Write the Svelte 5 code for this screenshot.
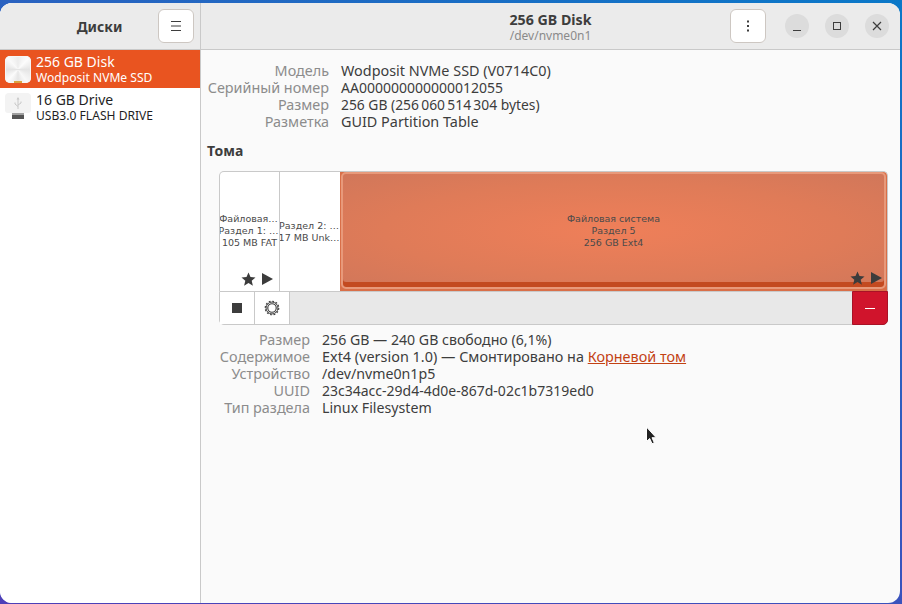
<script>
    const disks = [
        { name: '256 GB Disk', sub: 'Wodposit NVMe SSD', selected: true, kind: 'disk' },
        { name: '16 GB Drive', sub: 'USB3.0 FLASH DRIVE', selected: false, kind: 'usb' }
    ];

    const driveInfo = [
        ['Модель', 'Wodposit NVMe SSD (V0714C0)'],
        ['Серийный номер', 'AA000000000000012055'],
        ['Размер', '256 GB (256\u2009060\u2009514\u2009304 bytes)'],
        ['Разметка', 'GUID Partition Table']
    ];

    const volumeInfo = [
        ['Размер', '256 GB — 240 GB свободно (6,1%)'],
        ['Содержимое', 'Ext4 (version 1.0) — Смонтировано на '],
        ['Устройство', '/dev/nvme0n1p5'],
        ['UUID', '23c34acc-29d4-4d0e-867d-02c1b7319ed0'],
        ['Тип раздела', 'Linux Filesystem']
    ];
</script>

<div class="desktop">
    <div class="window">
        <aside class="sidebar">
            <header class="side-head">
                <span class="side-title">Диски</span>
                <button class="btn menu-btn" aria-label="Меню">
                    <svg width="16" height="16" viewBox="0 0 16 16"><path d="M3 3.500h10M3 8h10M3 12.500h10" stroke="#3d3d3d" stroke-width="1" fill="none"/></svg>
                </button>
            </header>
            <ul class="disk-list">
                {#each disks as disk}
                    <li class="disk" class:selected={disk.selected}>
                        {#if disk.kind === 'disk'}
                            <span class="disk-icon hdd"><span class="led"></span></span>
                        {:else}
                            <span class="disk-icon usb">
                                <span class="usb-body">
                                    <svg width="10" height="14" viewBox="0 0 10 14"><path d="M5 3v10M5 10.500L2 8V6.500M5 9l3-2V5.500" stroke="#c8c8c8" fill="none"/><path d="M3.500 3.500L5 1l1.500 2.500z" fill="#c8c8c8"/></svg>
                                </span>
                                <span class="usb-plug"></span>
                            </span>
                        {/if}
                        <span class="disk-text">
                            <span class="disk-name">{disk.name}</span>
                            <span class="disk-sub">{disk.sub}</span>
                        </span>
                    </li>
                {/each}
            </ul>
        </aside>

        <main class="content">
            <header class="main-head">
                <div class="titles">
                    <span class="title">256 GB Disk</span>
                    <span class="subtitle">/dev/nvme0n1</span>
                </div>
                <div class="controls">
                    <button class="btn more-btn" aria-label="Ещё">
                        <svg width="16" height="16" viewBox="0 0 16 16" fill="#3d3d3d"><rect x="7" y="2.500" width="2" height="2"/><rect x="7" y="7" width="2" height="2"/><rect x="7" y="11.500" width="2" height="2"/></svg>
                    </button>
                    <button class="win-btn" aria-label="Свернуть">
                        <svg width="12" height="12" viewBox="0 0 12 12"><path d="M2 10.500h8" stroke="#3d3d3d" stroke-width="1.200"/></svg>
                    </button>
                    <button class="win-btn" aria-label="Развернуть">
                        <svg width="12" height="12" viewBox="0 0 12 12"><rect x="2.500" y="2.500" width="7" height="7" stroke="#3d3d3d" fill="none"/></svg>
                    </button>
                    <button class="win-btn" aria-label="Закрыть">
                        <svg width="12" height="12" viewBox="0 0 12 12"><path d="M2 2l8 8M10 2l-8 8" stroke="#3d3d3d" stroke-width="1.200"/></svg>
                    </button>
                </div>
            </header>

            <section class="body">
                <dl class="info drive-info">
                    {#each driveInfo as row}
                        <dt>{row[0]}</dt>
                        <dd>{row[1]}</dd>
                    {/each}
                </dl>

                <h2 class="volumes-title">Тома</h2>

                <div class="volumes">
                    <div class="parts">
                        <div class="part fat">
                            <span>Файловая…</span>
                            <span>Раздел 1: …</span>
                            <span class="fat-size">105 MB FAT</span>
                            <div class="badges">
                                <svg width="15" height="14" viewBox="0 0 15 14"><path d="M7.500 0.500l2 4.600 5 .4-3.800 3.300 1.200 4.900-4.400-2.600-4.400 2.600 1.200-4.900L.5 5.500l5-.4z" fill="#3c3c3c"/></svg>
                                <svg width="11" height="12" viewBox="0 0 11 12"><path d="M0 0l11 6L0 12z" fill="#3c3c3c"/></svg>
                            </div>
                        </div>
                        <div class="part unknown">
                            <span>Раздел 2: …</span>
                            <span>17 MB Unk…</span>
                        </div>
                        <div class="ext4">
                            <div class="part ext4-inner">
                                <span>Файловая система</span>
                                <span>Раздел 5</span>
                                <span>256 GB Ext4</span>
                                <div class="badges">
                                    <svg width="15" height="14" viewBox="0 0 15 14"><path d="M7.500 0.500l2 4.600 5 .4-3.800 3.300 1.200 4.900-4.400-2.600-4.400 2.600 1.200-4.900L.5 5.500l5-.4z" fill="#3c3c3c"/></svg>
                                    <svg width="11" height="12" viewBox="0 0 11 12"><path d="M0 0l11 6L0 12z" fill="#3c3c3c"/></svg>
                                </div>
                            </div>
                        </div>
                    </div>
                    <div class="toolbar">
                        <button class="tool" aria-label="Остановить"><span class="stop"></span></button>
                        <button class="tool" aria-label="Настройки">
                            <svg width="16" height="16" viewBox="0 0 17 17" fill="none" stroke="#3d3d3d">
                                <circle cx="8.500" cy="8.500" r="4.500" stroke-width="1.200"/>
                                <circle cx="8.500" cy="8.500" r="6.300" stroke-width="1"/>
                                <circle cx="8.500" cy="8.500" r="7.200" stroke-width="1.200" stroke-dasharray="2 1.770"/>
                            </svg>
                        </button>
                        <span class="spacer"></span>
                        <button class="remove" aria-label="Удалить"><span class="minus"></span></button>
                    </div>
                </div>

                <dl class="info volume-info">
                    {#each volumeInfo as row, index}
                        <dt>{row[0]}</dt>
                        <dd>{row[1]}{#if index == 1}<a href="#root">Корневой том</a>{/if}</dd>
                    {/each}
                </dl>
            </section>
        </main>

        <svg class="cursor" width="14" height="20" viewBox="0 0 14 20">
            <path d="M1.500 1v14.500l3.200-3 2.300 5.200 2.300-1-2.300-5h4.200z" fill="#222" stroke="#fff" stroke-width="1"/>
        </svg>
    </div>
</div>

<style>
    :global(body) {
        margin: 0;
        background: #f6f5f4;
    }

    .desktop {
        width: 902px;
        height: 604px;
        padding-top: 3px;
        box-sizing: border-box;
        background: linear-gradient(200deg, #0a78c8 0%, #2a62c0 35%, #4d3fb8 100%);
        overflow: hidden;
    }

    .window {
        position: relative;
        display: flex;
        width: 900px;
        height: 600px;
        border-radius: 12px;
        overflow: hidden;
        background: #fafafa;
        font-family: "Noto Sans", "Open Sans", sans-serif;
        font-size: 14.400px;
        color: #3d3d3d;
    }

    button {
        padding: 0;
        font: inherit;
        cursor: default;
    }

    .sidebar {
        width: 200px;
        flex: none;
        display: flex;
        flex-direction: column;
        background: #fff;
        border-right: 1px solid #c9c9c9;
    }

    .side-head,
    .main-head {
        height: 46px;
        flex: none;
        background: #ebebeb;
        border-bottom: 1px solid #c9c9c9;
        display: flex;
        align-items: center;
    }

    .side-head {
        padding-right: 6px;
    }

    .side-title {
        flex: 1;
        padding-left: 41px;
        text-align: center;
        font-weight: 700;
        font-size: 14px;
    }

    .btn {
        width: 36px;
        height: 34px;
        display: flex;
        align-items: center;
        justify-content: center;
        background: #fff;
        border: 1px solid #cdc7c2;
        border-radius: 6px;
    }

    .disk-list {
        list-style: none;
        margin: 0;
        padding: 0;
    }

    .disk {
        height: 38px;
        display: flex;
        align-items: center;
        gap: 5px;
        padding-left: 5px;
        color: #1f1f1f;
    }

    .disk.selected {
        background: #e95420;
        color: #fff;
    }

    .disk-icon {
        position: relative;
        width: 26px;
        flex: none;
    }

    .hdd {
        height: 27px;
        border-radius: 5px;
        background: conic-gradient(#ececec, #fcfcfc 12%, #e4e4e4 25%, #f8f8f8 40%, #e6e6e6 50%, #fcfcfc 62%, #e4e4e4 75%, #fafafa 88%, #ececec);
        box-shadow: inset 0 0 0 1px #f6f6f6;
    }

    .led {
        position: absolute;
        left: 9px;
        bottom: 0;
        width: 8px;
        height: 2px;
        background: #d9a441;
    }

    .usb {
        height: 26px;
        margin-bottom: 2px;
    }

    .usb-body {
        display: flex;
        justify-content: center;
        padding-top: 3px;
        box-sizing: border-box;
        width: 26px;
        height: 20px;
        background: #f3f3f3;
        border-radius: 4px 4px 3px 3px;
    }

    .usb-plug {
        display: block;
        width: 12px;
        height: 6px;
        margin-left: 7px;
        background: linear-gradient(#a0a0a0 0 2px, #555 2px);
    }

    .disk-text {
        display: flex;
        flex-direction: column;
    }

    .disk-name {
        font-size: 14px;
        line-height: 17px;
    }

    .disk-sub {
        font-size: 12.100px;
        line-height: 15px;
    }

    .content {
        flex: 1;
        min-width: 0;
        display: flex;
        flex-direction: column;
    }

    .main-head {
        position: relative;
        justify-content: flex-end;
    }

    .titles {
        position: absolute;
        left: 0;
        right: 0;
        display: flex;
        flex-direction: column;
        align-items: center;
    }

    .title {
        font-weight: 700;
        font-size: 14.200px;
        line-height: 17px;
        padding-top: 1px;
    }

    .subtitle {
        font-size: 12px;
        line-height: 15px;
        color: #8a8a8a;
    }

    .controls {
        position: relative;
        display: flex;
        align-items: center;
        gap: 16px;
        padding-right: 11px;
    }

    .more-btn {
        margin-right: 3px;
    }

    .win-btn {
        width: 24px;
        height: 24px;
        display: flex;
        align-items: center;
        justify-content: center;
        border: 0;
        border-radius: 50%;
        background: #dcdcdc;
    }

    .body {
        padding: 12px 12px 0 6px;
    }

    .info {
        display: grid;
        margin: 0;
        line-height: 17px;
    }

    .info dt {
        text-align: right;
        color: #8c8c8c;
        white-space: nowrap;
    }

    .info dd {
        margin: 0;
        white-space: nowrap;
    }

    /* the installed font runs wider or narrower than the original per row */
    .drive-info dd:nth-child(4) {
        font-size: 14px;
    }

    .drive-info dd:nth-child(6) {
        font-size: 13.850px;
    }

    .volume-info dd:nth-child(2) {
        font-size: 14.150px;
    }

    .volume-info dd:nth-child(4) {
        letter-spacing: 0.01px;
    }

    .volume-info dd:nth-child(6),
    .volume-info dd:nth-child(10) {
        font-size: 14.200px;
    }

    .volume-info dd:nth-child(8) {
        font-size: 14px;
    }

    .drive-info {
        grid-template-columns: 122px auto;
        column-gap: 12px;
    }

    .volumes-title {
        margin: 12px 0 12px;
        font-size: 14px;
        line-height: 17px;
        font-weight: 700;
    }

    .volumes {
        margin-left: 12px;
        width: 669px;
    }

    .parts {
        display: flex;
        height: 120px;
        box-sizing: border-box;
        border: 1px solid #c9c9c9;
        border-bottom: 0;
        border-radius: 5px 5px 0 0;
        overflow: hidden;
        background: #fff;
        font-family: "DejaVu Sans", sans-serif;
        font-size: 9.500px;
        line-height: 12px;
        color: #4a4a4a;
    }

    .part {
        position: relative;
        display: flex;
        flex-direction: column;
        align-items: center;
        justify-content: center;
        white-space: nowrap;
        overflow: hidden;
    }

    .fat {
        width: 59px;
        flex: none;
        box-sizing: content-box;
        border-right: 1px solid #c9c9c9;
        padding-bottom: 2px;
    }

    .fat span {
        position: relative;
        left: -1px;
    }

    .fat .fat-size {
        left: 0;
    }

    .unknown {
        width: 60px;
        flex: none;
    }

    .unknown span {
        position: relative;
        left: -1px;
    }

    .ext4 {
        flex: 1;
        display: flex;
        padding: 1px 1px 2px;
        margin-top: -1px;
        background: #d96f48;
    }

    .ext4-inner {
        flex: 1;
        box-sizing: border-box;
        background: radial-gradient(ellipse at center, #ef7f59 0%, #df7b58 60%, #d1775a 100%);
        border: 2px solid #e8997a;
        border-radius: 5px;
        box-shadow: inset 0 -5px 0 #c34a20;
    }

    .badges {
        position: absolute;
        right: 6px;
        bottom: 5px;
        display: flex;
        align-items: center;
        gap: 6px;
    }

    .ext4-inner .badges {
        right: 2px;
        bottom: 2px;
    }

    .toolbar {
        display: flex;
        height: 34px;
        box-sizing: border-box;
        background: #e8e8e8;
        border: 1px solid #c9c9c9;
        border-radius: 0 0 5px 5px;
    }

    .tool {
        width: 35px;
        flex: none;
        display: flex;
        align-items: center;
        justify-content: center;
        background: #fff;
        border: 0;
        border-right: 1px solid #c9c9c9;
    }

    .stop {
        width: 10px;
        height: 10px;
        background: #3d3d3d;
    }

    .spacer {
        flex: 1;
    }

    .remove {
        width: 36px;
        margin: -1px -1px -1px 0;
        display: flex;
        align-items: center;
        justify-content: center;
        background: #d0142c;
        border: 1px solid #a81226;
        border-radius: 0 0 5px 0;
    }

    .minus {
        width: 10px;
        height: 1px;
        background: #fff;
    }

    .volume-info {
        margin: 6px 0 0 12px;
        grid-template-columns: 91px auto;
        column-gap: 12px;
    }

    .volume-info a {
        color: #c34113;
        text-decoration: underline;
    }

    .cursor {
        position: absolute;
        left: 645px;
        top: 423px;
    }
</style>
